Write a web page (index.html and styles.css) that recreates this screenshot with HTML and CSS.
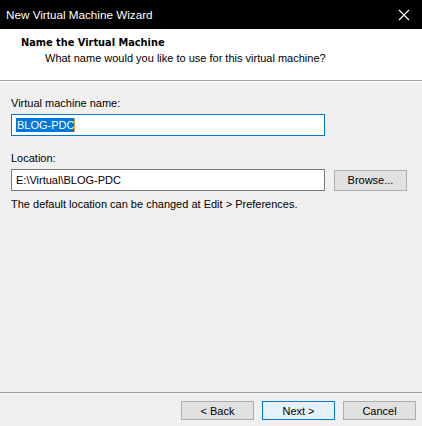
FILE: index.html
```html
<!DOCTYPE html>
<html>
<head>
<meta charset="utf-8">
<link rel="stylesheet" href="styles.css">
</head>
<body>
<div class="window">
  <div class="titlebar">
    <span class="title">New Virtual Machine Wizard</span>
    <svg class="close" width="12" height="12" viewBox="0 0 12 12"><path d="M1 1 L11 11 M11 1 L1 11" stroke="#fff" stroke-width="1.2" fill="none"/></svg>
  </div>
  <div class="header">
    <div class="h-title">Name the Virtual Machine</div>
    <div class="h-sub">What name would you like to use for this virtual machine?</div>
  </div>
  <div class="content">
    <div class="label">Virtual machine name:</div>
    <div class="field focused"><span class="sel">BLOG-PDC</span><span class="caret"></span></div>
    <div class="label loc">Location:</div>
    <div class="row">
      <div class="field">E:\Virtual\BLOG-PDC</div>
      <div class="btn browse">Browse...</div>
    </div>
    <div class="hint">The default location can be changed at Edit &gt; Preferences.</div>
  </div>
  <div class="footer">
    <div class="btn">&lt; Back</div>
    <div class="btn default">Next &gt;</div>
    <div class="btn">Cancel</div>
  </div>
</div>
</body>
</html>
```
FILE: styles.css
```css
html, body {
  margin: 0;
  padding: 0;
}
body {
  width: 422px;
  height: 426px;
  background: #f0f0f0;
  font-family: "Liberation Sans", Arial, sans-serif;
  font-size: 11px;
  color: #000;
  overflow: hidden;
}
.window {
  display: flex;
  flex-direction: column;
  height: 426px;
}
.titlebar {
  height: 29px;
  background: #000;
  color: #fff;
  display: flex;
  align-items: center;
  justify-content: space-between;
  padding: 0 12px 0 6px;
  font-size: 11.7px;
  flex: none;
}
.close {
  display: block;
}
.header {
  background: #fff;
  height: 52px;
  border-bottom: 1px solid #a0a0a0;
  box-sizing: border-box;
  flex: none;
  padding-top: 7px;
}
.h-title {
  font-family: "DejaVu Sans", Verdana, sans-serif;
  font-weight: bold;
  font-size: 9.8px;
  padding-left: 21px;
  line-height: 14px;
}
.h-sub {
  padding-left: 45px;
  line-height: 15px;
  margin-top: 1px;
}
.content {
  flex: 1;
  padding: 14px 11px 0 11px;
  border-top: 1px solid #fff;
}
.label {
  line-height: 15px;
  margin-bottom: 3px;
}
.label.loc {
  margin-top: 15px;
}
.field {
  width: 314px;
  height: 22px;
  box-sizing: border-box;
  background: #fff;
  border: 1px solid #7a7a7a;
  padding: 0 4px;
  display: flex;
  align-items: center;
  line-height: 14px;
}
.field.focused {
  border-color: #0078d7;
}
.sel {
  background: #0078d7;
  color: #fff;
  padding: 0 0 0 1px;
  line-height: 14px;
}
.caret {
  display: inline-block;
  width: 1px;
  height: 14px;
  background: #e0a040;
}
.row {
  display: flex;
  align-items: center;
  gap: 9px;
}
.btn {
  width: 73px;
  height: 19px;
  box-sizing: border-box;
  background: #e1e1e1;
  border: 1px solid #adadad;
  display: flex;
  align-items: center;
  justify-content: center;
}
.btn.browse {
  height: 21px;
}
.btn.default {
  background: #e5f1fb;
  border-color: #0078d7;
}
.hint {
  margin-top: 6px;
  line-height: 15px;
}
.footer {
  flex: none;
  height: 34px;
  box-sizing: border-box;
  border-top: 1px solid #a0a0a0;
  display: flex;
  justify-content: flex-end;
  gap: 8px;
  padding: 8px 6px 0 0;
}
```
